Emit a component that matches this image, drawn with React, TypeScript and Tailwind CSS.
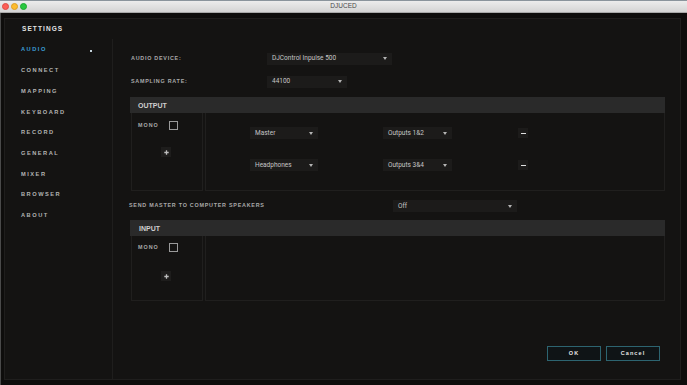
import React from "react";

const lbl =
  "font-['Liberation_Sans',Arial,sans-serif] font-bold text-[5.4px] tracking-[0.75px] text-[#a9a9a9] leading-none whitespace-nowrap";
const dropText =
  "font-['Roboto',sans-serif] text-[6.5px] text-[#c6c6c6] leading-none whitespace-nowrap";
const barText =
  "font-['Liberation_Sans',Arial,sans-serif] font-bold text-[7px] text-[#cfcfcf] leading-none";
const btn =
  "w-[54px] h-[15px] border border-[#2d6470] bg-[#0f1416] flex items-center justify-center font-['Liberation_Sans',Arial,sans-serif] font-bold text-[5.5px] tracking-[1.1px] text-[#e4e4e4] leading-none";

const menu = ["AUDIO", "CONNECT", "MAPPING", "KEYBOARD", "RECORD", "GENERAL", "MIXER", "BROWSER", "ABOUT"];

function Arrow() {
  return (
    <svg width="4" height="3" viewBox="0 0 4 3" className="shrink-0">
      <polygon points="0,0 4,0 2,3" fill="#b4b4b4" />
    </svg>
  );
}

function Drop({ text, w }: { text: string; w: string }) {
  return (
    <div className={`flex items-center justify-between h-[12px] bg-[#1c1b1a] pl-[5px] pr-[5px] ${w}`}>
      <span className={dropText}>{text}</span>
      <Arrow />
    </div>
  );
}

function Plus() {
  return (
    <div className="w-[10px] h-[10px] bg-[#1e1d1c] flex items-center justify-center">
      <svg width="5" height="5" viewBox="0 0 5 5">
        <path d="M2.5 0.3v4.4M0.3 2.5h4.4" stroke="#bdbdbd" strokeWidth="1.3" />
      </svg>
    </div>
  );
}

function Minus() {
  return (
    <div className="w-[10px] h-[10px] bg-[#1c1b1a] flex items-center justify-center">
      <div className="w-[5px] h-[1px] bg-[#e0e0e0]" />
    </div>
  );
}

function MonoBox({ top, gap }: { top: string; gap: string }) {
  return (
    <div className="ml-[1px] w-[72px] border-x border-b border-[#201f1e] flex flex-col pl-[6px]">
      <div className={`flex items-center gap-[10px] ${top}`}>
        <span className="font-['Liberation_Sans',Arial,sans-serif] font-bold text-[5.4px] tracking-[1px] text-[#a9a9a9] leading-none">
          MONO
        </span>
        <div className="w-[9px] h-[9px] border border-[#9a9a9a]" />
      </div>
      <div className={`${gap} ml-[23px]`}>
        <Plus />
      </div>
    </div>
  );
}

export default function App() {
  return (
    <div className="w-[687px] h-[385px] bg-[#0e0d0c] flex flex-col overflow-hidden">
      {/* title bar */}
      <div className="h-[13px] shrink-0 relative bg-gradient-to-b from-[#ececec] to-[#d4d4d4] border-t border-[#8a949c] border-b border-b-[#a9a9a9] flex items-center justify-center">
        <div className="absolute left-[2px] top-[2px] flex gap-[2px]">
          <div className="w-[7px] h-[7px] rounded-full bg-[#fc5f57] border border-[#de4a42]" />
          <div className="w-[7px] h-[7px] rounded-full bg-[#fdbc2e] border border-[#de9e20]" />
          <div className="w-[7px] h-[7px] rounded-full bg-[#28c840] border border-[#1ea930]" />
        </div>
        <span className="font-['Liberation_Sans',Arial,sans-serif] text-[6.5px] text-[#4a4a4a] leading-none">DJUCED</span>
      </div>

      <div className="flex-1 border-l border-[#4a4a4a] pt-[5px] pl-[3px] pr-[6px]">
        <div className="h-[362px] bg-[#141312] border border-[#1f1e1d] flex flex-col">
          {/* header */}
          <div className="h-[20px] shrink-0 flex items-center pl-[17px]">
            <span className="font-['Liberation_Sans',Arial,sans-serif] font-bold text-[6.5px] tracking-[1.1px] text-[#e2e2e2] leading-none">
              SETTINGS
            </span>
          </div>

          <div className="flex flex-1">
            {/* sidebar */}
            <div className="w-[108px] border-r border-[#1f1e1d] pt-[1px] flex flex-col">
              {menu.map((m, i) => (
                <div key={m} className="h-[20.7px] flex items-center pl-[16px] relative">
                  <span
                    className={`font-['Liberation_Sans',Arial,sans-serif] font-bold text-[5.7px] tracking-[1.5px] leading-none ${
                      i === 0 ? "text-[#3b9fd9]" : "text-[#b3b3b3]"
                    }`}
                  >
                    {m}
                  </span>
                  {i === 0 && <div className="absolute left-[85px] top-[10px] w-[1.5px] h-[1.5px] bg-[#c5d3dc]" />}
                </div>
              ))}
            </div>

            {/* content */}
            <div className="flex-1 pl-[17px] pr-[15px] flex flex-col">
              <div className="mt-[13px] h-[13px] flex items-center">
                <div className="w-[137px] pl-[1px] flex items-center">
                  <span className={lbl}>AUDIO DEVICE:</span>
                </div>
                <Drop text="DJControl Inpulse 500" w="w-[125px]" />
              </div>
              <div className="mt-[10px] h-[13px] flex items-center">
                <div className="w-[137px] pl-[1px] flex items-center">
                  <span className={lbl}>SAMPLING RATE:</span>
                </div>
                <Drop text="44100" w="w-[80px]" />
              </div>

              {/* output */}
              <div className="mt-[9px] h-[16px] bg-[#2a2a2a] flex items-center pl-[8px]">
                <span className={barText}>OUTPUT</span>
              </div>
              <div className="h-[78px] flex gap-[2px]">
                <MonoBox top="pt-[8px]" gap="mt-[17px]" />
                <div className="flex-1 border-x border-b border-[#201f1e] pt-[14px] pl-[44px] flex flex-col gap-[20px]">
                  {[
                    ["Master", "Outputs 1&2"],
                    ["Headphones", "Outputs 3&4"],
                  ].map(([a, b]) => (
                    <div key={a} className="flex items-center h-[12px]">
                      <Drop text={a} w="w-[68px]" />
                      <div className="ml-[65px] flex">
                        <Drop text={b} w="w-[69px]" />
                      </div>
                      <div className="ml-[66px] flex">
                        <Minus />
                      </div>
                    </div>
                  ))}
                </div>
              </div>

              {/* send master */}
              <div className="mt-[9px] h-[12px] flex items-center -ml-[1px]">
                <div className="w-[264px] flex items-center">
                  <span className="font-['Liberation_Sans',Arial,sans-serif] font-bold text-[5.4px] tracking-[0.75px] text-[#a9a9a9] leading-none whitespace-nowrap">
                    SEND MASTER TO COMPUTER SPEAKERS
                  </span>
                </div>
                <Drop text="Off" w="w-[124px]" />
              </div>

              {/* input */}
              <div className="mt-[8px] h-[16px] bg-[#2a2a2a] flex items-center pl-[9px]">
                <span className={barText}>INPUT</span>
              </div>
              <div className="h-[65px] flex gap-[2px]">
                <MonoBox top="pt-[7px]" gap="mt-[19px]" />
                <div className="flex-1 border-x border-b border-[#201f1e]" />
              </div>

              {/* buttons */}
              <div className="mt-[45px] flex justify-end gap-[5px] pr-[5px]">
                <button className={btn}>OK</button>
                <button className={btn}>Cancel</button>
              </div>
            </div>
          </div>
        </div>
      </div>
    </div>
  );
}
